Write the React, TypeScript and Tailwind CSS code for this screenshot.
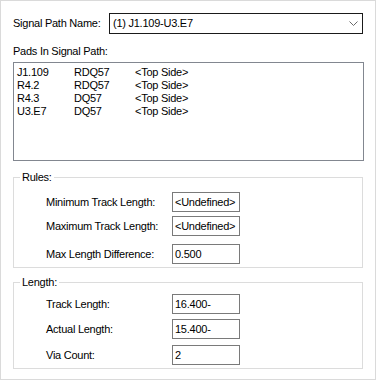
import React from "react";

const pads = [
  ["J1.109", "RDQ57", "<Top Side>"],
  ["R4.2", "RDQ57", "<Top Side>"],
  ["R4.3", "DQ57", "<Top Side>"],
  ["U3.E7", "DQ57", "<Top Side>"],
];

function Field({ label, value, gapTop }: { label: string; value: string; gapTop: string }) {
  return (
    <div className={`flex items-center h-[20px] ${gapTop}`}>
      <span className="w-[126px] whitespace-nowrap">{label}</span>
      <div className="w-[68px] h-[20px] border border-[#7a7a7a] flex items-center pl-[2px] whitespace-nowrap overflow-hidden">
        {value}
      </div>
    </div>
  );
}

export default function App() {
  return (
    <div
      className="w-[376px] h-[380px] border border-[#dadada] bg-white pl-[12px] pr-[11px] pt-[12px] flex flex-col text-[11px] leading-[13px] tracking-[-0.25px] text-black"
      style={{ fontFamily: '"Liberation Sans", Arial, sans-serif' }}
    >
      <div className="flex items-center h-[21px]">
        <span className="w-[96px] whitespace-nowrap">Signal Path Name:</span>
        <div className="flex-1 mr-[1px] h-[21px] border border-[#1a1a1a] flex items-center pl-[3px] pr-[4px]">
          <span className="flex-1 whitespace-nowrap">(1) J1.109-U3.E7</span>
          <svg width="9" height="5" viewBox="0 0 9 5" className="shrink-0">
            <polyline points="0.5,0.5 4.5,4.5 8.5,0.5" fill="none" stroke="#6a6a6a" strokeWidth="1" />
          </svg>
        </div>
      </div>

      <div className="mt-[11px] whitespace-nowrap">Pads In Signal Path:</div>

      <div className="mt-[4px] h-[99px] border border-[#828790] pl-[3px] pt-[3px] flex flex-col">
        {pads.map((r) => (
          <div key={r[0]} className="flex h-[13px] whitespace-nowrap">
            <span className="w-[57px]">{r[0]}</span>
            <span className="w-[61px]">{r[1]}</span>
            <span>{r[2]}</span>
          </div>
        ))}
      </div>

      <fieldset className="mt-[10px] mr-[1px] border border-[#dcdcdc] p-0 m-0 min-w-0">
        <legend className="ml-[6px] px-[2px] leading-[13px]">Rules:</legend>
        <div className="pl-[32px] pt-[8px] pb-[3px] flex flex-col">
          <Field label="Minimum Track Length:" value="<Undefined>" gapTop="" />
          <Field label="Maximum Track Length:" value="<Undefined>" gapTop="mt-[4px]" />
          <Field label="Max Length Difference:" value="0.500" gapTop="mt-[8px]" />
        </div>
      </fieldset>

      <fieldset className="mt-[8px] mr-[1px] border border-[#dcdcdc] p-0 min-w-0">
        <legend className="ml-[6px] px-[2px] leading-[13px]">Length:</legend>
        <div className="pl-[32px] pt-[5px] pb-[3px] flex flex-col">
          <Field label="Track Length:" value="16.400-" gapTop="" />
          <Field label="Actual Length:" value="15.400-" gapTop="mt-[5px]" />
          <Field label="Via Count:" value="2" gapTop="mt-[6px]" />
        </div>
      </fieldset>
    </div>
  );
}
